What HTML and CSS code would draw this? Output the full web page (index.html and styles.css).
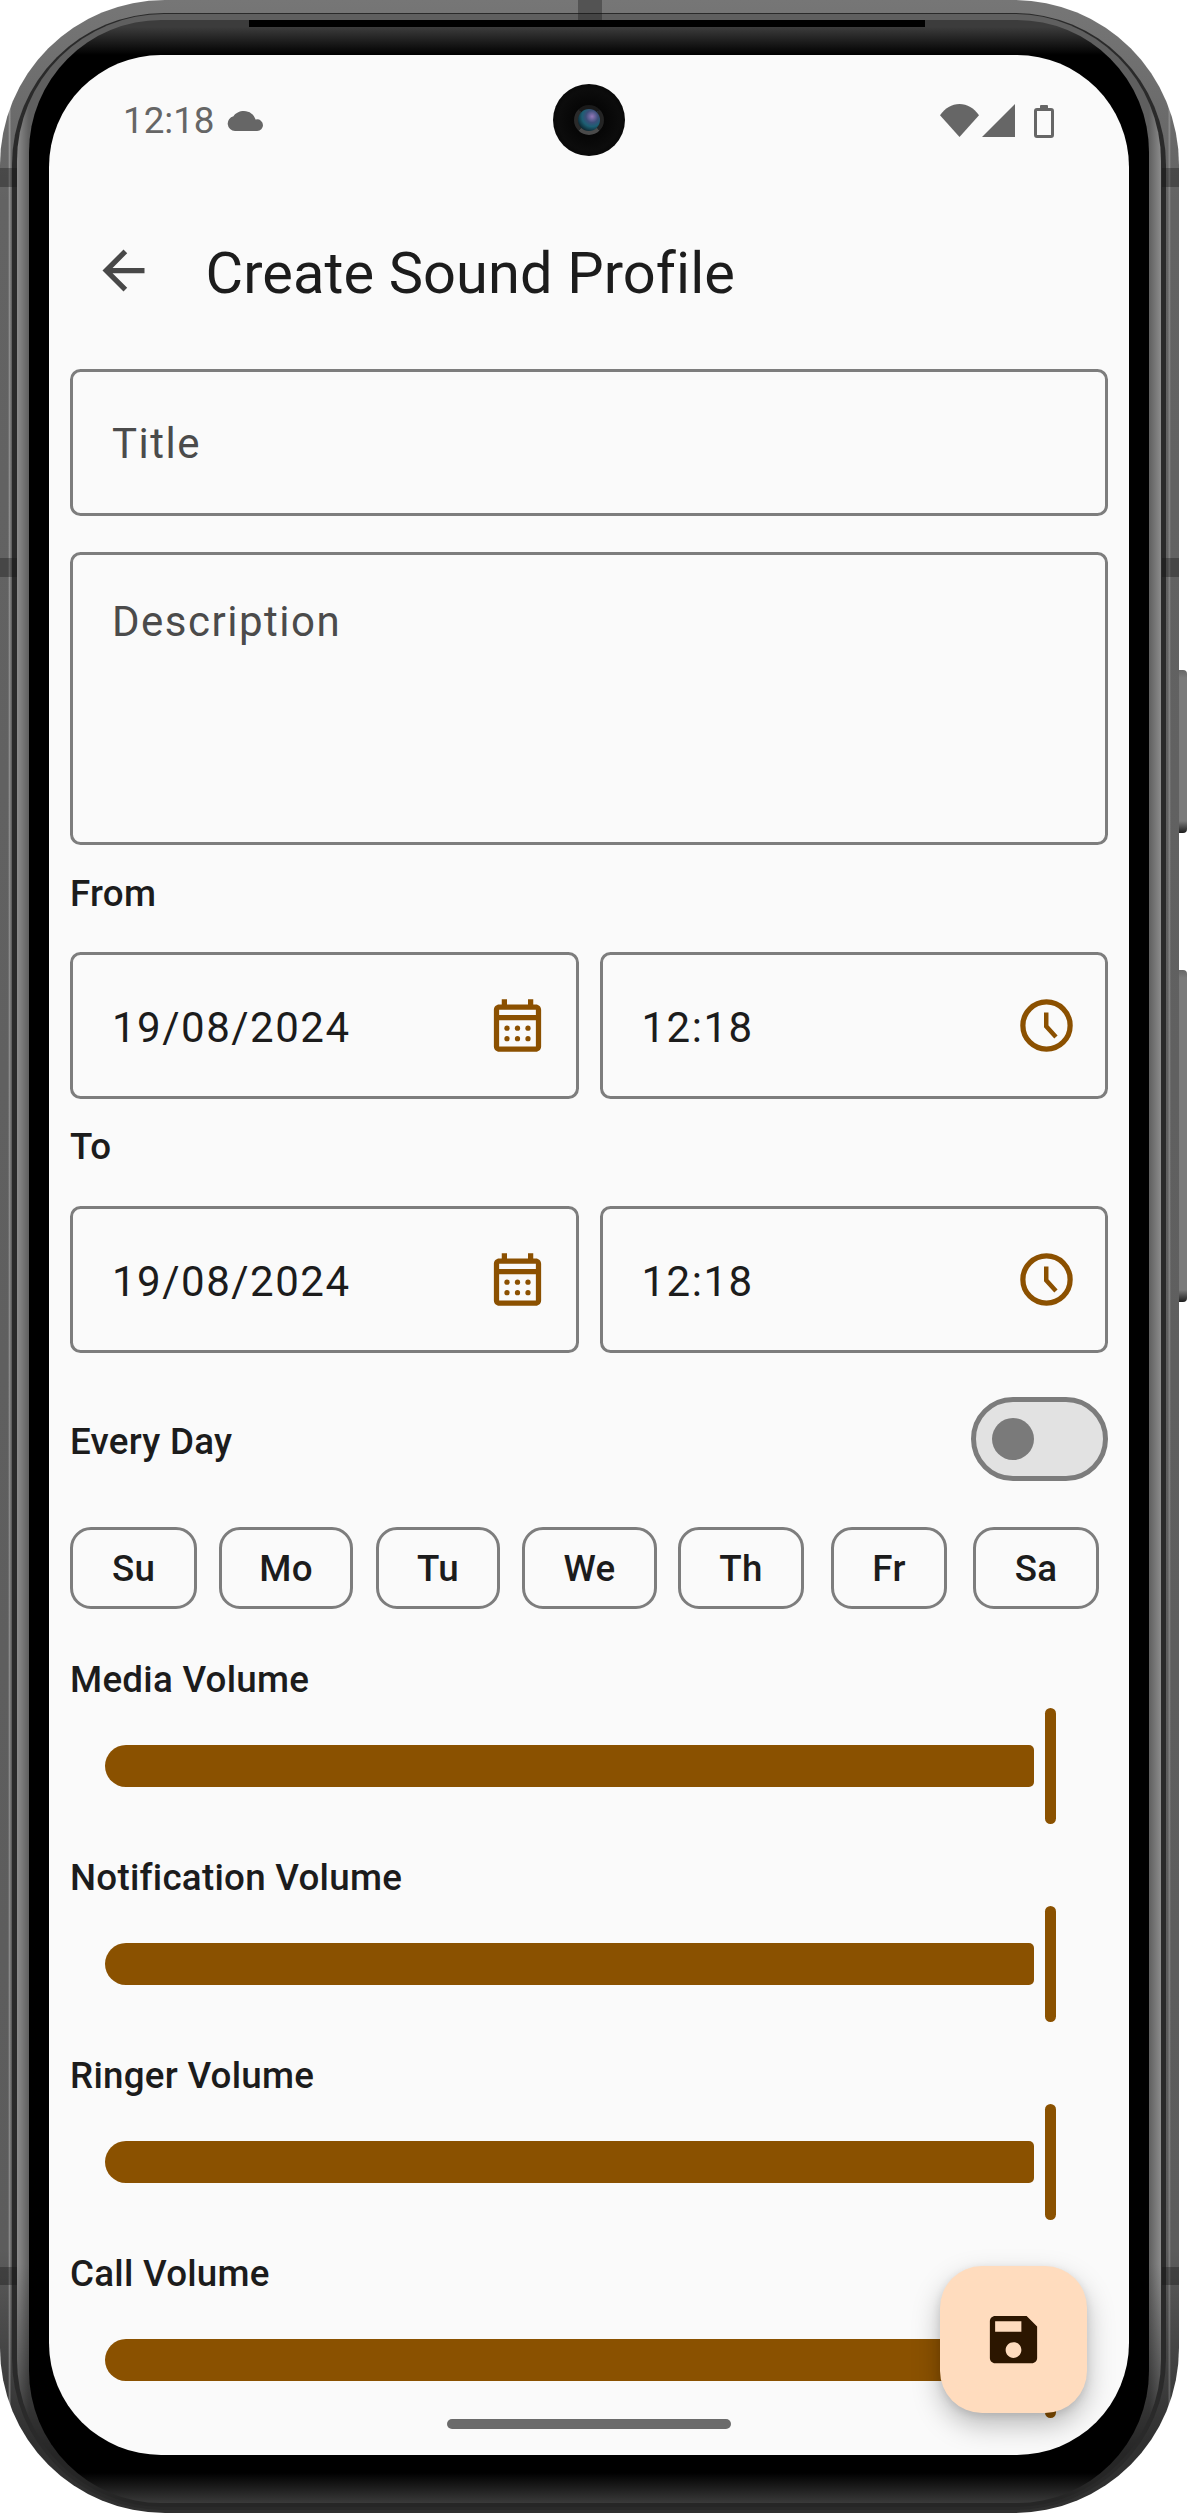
FILE: index.html
```html
<!DOCTYPE html>
<html>

	<head>
		<meta charset="UTF-8">
		<title>Create Sound Profile</title>
		<link rel="stylesheet" href="styles.css">
	</head>

	<body>
		<div class="frame">
			<i class="antenna antenna-top"></i>
			<i class="antenna antenna-left"></i>
			<i class="antenna antenna-left2"></i>
			<i class="antenna antenna-right"></i>
			<i class="antenna antenna-right2"></i>
			<i class="antenna antenna-bottom-left"></i>
			<i class="antenna antenna-bottom-right"></i>
			<i class="side-btn side-power"></i>
			<i class="side-btn side-volume"></i>
			<div class="groove">
				<div class="rim">
					<div class="bezel">
						<i class="slit"></i>
						<div class="screen">
							<div class="camera"><i class="lens"></i></div>

							<div class="statusbar">
								<div class="status-left">
									<span class="clock">12:18</span>
									<svg class="cloud" viewBox="0 0 36 20"><path d="M8 20a7.500 7.500 0 0 1-1.500-14.800 C8.500 2 12.500 0 17 0c5.500 0 10 3.500 11.500 8.500 H29a5.800 5.800 0 0 1 7 5.700 5.800 5.800 0 0 1-5.800 5.800z" /></svg>
								</div>
								<div class="status-right">
									<svg class="wifi" viewBox="0 0 39 33"><path d="M19.500 33 0 11.200C5 4.300 11.800 0 19.500 0S34 4.300 39 11.200z" /></svg>
									<svg class="signal" viewBox="0 0 33 33"><path d="M33 0v33H0z" /></svg>
									<div class="battery"></div>
								</div>
							</div>

							<div class="appbar">
								<svg class="back" viewBox="0 0 24 24"><path d="M20 11H7.830l5.590-5.590L12 4l-8 8 8 8 1.410-1.410L7.830 13H20z" /></svg>
								<h1>Create Sound Profile</h1>
							</div>

							<div class="form">
								<div class="field field-title"><span class="hint">Title</span></div>
								<div class="field field-desc"><span class="hint">Description</span></div>

								<div class="label label-from">From</div>
								<div class="pair">
									<div class="field">
										<span>19/08/2024</span>
										<svg class="ic" viewBox="0 0 24 24"><use href="#calendar" /></svg>
									</div>
									<div class="field">
										<span>12:18</span>
										<svg class="ic" viewBox="0 0 24 24"><use href="#time" /></svg>
									</div>
								</div>

								<div class="label label-to">To</div>
								<div class="pair">
									<div class="field">
										<span>19/08/2024</span>
										<svg class="ic" viewBox="0 0 24 24"><use href="#calendar" /></svg>
									</div>
									<div class="field">
										<span>12:18</span>
										<svg class="ic" viewBox="0 0 24 24"><use href="#time" /></svg>
									</div>
								</div>

								<div class="everyday">
									<div class="label">Every Day</div>
									<div class="switch"><i></i></div>
								</div>

								<div class="days">
									<div class="chip">Su</div>
									<div class="chip">Mo</div>
									<div class="chip">Tu</div>
									<div class="chip">We</div>
									<div class="chip">Th</div>
									<div class="chip">Fr</div>
									<div class="chip">Sa</div>
								</div>

								<div class="volume">
									<div class="label">Media Volume</div>
									<div class="slider"><div class="track"></div><div class="thumb"></div></div>
								</div>
								<div class="volume">
									<div class="label">Notification Volume</div>
									<div class="slider"><div class="track"></div><div class="thumb"></div></div>
								</div>
								<div class="volume">
									<div class="label">Ringer Volume</div>
									<div class="slider"><div class="track"></div><div class="thumb"></div></div>
								</div>
								<div class="volume">
									<div class="label">Call Volume</div>
									<div class="slider"><div class="track"></div><div class="thumb"></div></div>
								</div>
							</div>

							<div class="fab">
								<svg viewBox="0 0 24 24"><path d="M17 3H5c-1.110 0-2 .9-2 2v14c0 1.100.89 2 2 2h14c1.100 0 2-.9 2-2V7l-4-4zm-5 16c-1.660 0-3-1.340-3-3s1.340-3 3-3 3 1.340 3 3-1.340 3-3 3zm3-10H5V5h10v4z" /></svg>
							</div>
							<div class="handle"></div>
						</div>
					</div>
				</div>
			</div>
		</div>

		<svg class="defs">
			<symbol id="calendar" viewBox="0 0 24 24">
				<path d="M19 4h-1V2h-2v2H8V2H6v2H5C3.900 4 3 4.900 3 6v14c0 1.100.9 2 2 2h14c1.100 0 2-.9 2-2V6c0-1.100-.9-2-2-2zm0 16H5V10h14v10zm0-12H5V6h14v2z" />
				<circle cx="8" cy="13" r="1" />
				<circle cx="12" cy="13" r="1" />
				<circle cx="16" cy="13" r="1" />
				<circle cx="8" cy="17" r="1" />
				<circle cx="12" cy="17" r="1" />
				<circle cx="16" cy="17" r="1" />
			</symbol>
			<symbol id="time" viewBox="0 0 24 24">
				<circle cx="12" cy="12" r="9" fill="none" stroke="currentColor" stroke-width="2" />
				<path d="M11.900 7v5.300l3.700 4.100" fill="none" stroke="currentColor" stroke-width="1.700" />
			</symbol>
		</svg>
	</body>

</html>
```

FILE: styles.css
```css
* {
	box-sizing: border-box;
}

html,
body {
	margin: 0;
	background: #fff;
}

body {
	width: 1187px;
	height: 2513px;
	overflow: hidden;
	font-family: Roboto, "Liberation Sans", sans-serif;
	color: #1c1c1c;
}

h1 {
	margin: 0;
}

.defs {
	width: 0;
	height: 0;
	position: absolute;
}

/* phone body */
.frame {
	width: 1179px;
	height: 2513px;
	position: relative;
	padding: 13px 13px 3px 12px;
	border-radius: 165px;
	background:
		linear-gradient(90deg, transparent 8px, rgba(255, 255, 255, .28) 9.500px, transparent 11.500px, transparent calc(100% - 11.500px), rgba(255, 255, 255, .2) calc(100% - 9.500px), transparent calc(100% - 8px)),
		linear-gradient(180deg, #767676 0, #636363 200px, #5c5c5c 2250px, #303030 2440px);
}

.groove {
	height: 100%;
	padding: 1px 5px 3px;
	border-radius: 152px;
	background: #2a2a2a;
}

.rim {
	height: 100%;
	padding: 6px 12px 4px;
	border-radius: 147px;
	background:
		linear-gradient(180deg, transparent 2250px, rgba(0, 0, 0, .6) 2440px),
		linear-gradient(90deg, #8c8c8c 0, #5f5f5f 12px, #5f5f5f calc(100% - 12px), #8c8c8c 100%);
}

.bezel {
	height: 100%;
	position: relative;
	padding: 35px 20px 43px;
	border-radius: 132px;
	background: linear-gradient(180deg, #3c3c3c 7px, #000 35px, #000 calc(100% - 30px), #3a3a3a 100%);
}

.slit {
	position: absolute;
	top: 0;
	left: 220px;
	right: 224px;
	height: 7px;
	background: #000;
}

.antenna {
	position: absolute;
	z-index: 1;
	background: rgba(20, 20, 20, .35);
}

.antenna-top {
	top: 0;
	left: 578px;
	width: 24px;
	height: 20px;
}

.antenna-left {
	top: 168px;
	left: 0;
	width: 17px;
	height: 19px;
}

.antenna-left2 {
	top: 558px;
	left: 0;
	width: 17px;
	height: 19px;
}

.antenna-right {
	top: 168px;
	right: 0;
	width: 17px;
	height: 19px;
}

.antenna-right2 {
	top: 558px;
	right: 0;
	width: 17px;
	height: 19px;
}

.antenna-bottom-left {
	top: 2267px;
	left: 0;
	width: 17px;
	height: 18px;
}

.antenna-bottom-right {
	top: 2267px;
	right: 0;
	width: 17px;
	height: 18px;
}

.side-btn {
	position: absolute;
	right: -8px;
	width: 8px;
	border-radius: 0 4px 4px 0;
	background: linear-gradient(180deg, #666 0, #7a7a7a 8px, #7a7a7a calc(100% - 12px), #1d1d1d 100%);
}

.side-power {
	top: 670px;
	height: 163px;
}

.side-volume {
	top: 970px;
	height: 332px;
}

/* screen */
.screen {
	width: 1080px;
	height: 2400px;
	position: relative;
	overflow: hidden;
	border-radius: 112px;
	background: #fafafa;
}

.camera {
	width: 72px;
	height: 72px;
	position: absolute;
	top: 29px;
	left: 504px;
	display: flex;
	align-items: center;
	justify-content: center;
	border-radius: 50%;
	background: radial-gradient(circle, #000 0, #0c0c0c 60%, #000 100%);
}

.lens {
	width: 30px;
	height: 30px;
	border-radius: 50%;
	border: 4px solid;
	border-color: #1a1a1a #242424 #4a4a4a #2a2a2a;
	background: radial-gradient(circle at 64% 34%, #9478b8 0, #3c4f7a 30%, #1d5f73 50%, #07141c 85%);
}

.statusbar {
	height: 131px;
	padding: 49px 75px 0 74px;
	display: flex;
	justify-content: space-between;
}

.status-left {
	height: 34px;
	display: flex;
	align-items: center;
	gap: 12px;
	color: #666;
}

.clock {
	font-size: 36.750px;
	line-height: 34px;
}

.cloud {
	width: 36px;
	height: 20px;
	fill: #666;
}

.status-right {
	height: 34px;
	display: flex;
	align-items: flex-start;
	fill: #666;
}

.wifi {
	width: 39px;
	height: 33px;
}

.signal {
	width: 33px;
	height: 33px;
	margin-left: 3px;
}

.battery {
	width: 20px;
	height: 30px;
	position: relative;
	margin: 4px 0 0 19px;
	border: 3px solid #666;
	border-radius: 3px;
}

.battery::before {
	content: "";
	width: 8px;
	height: 4px;
	position: absolute;
	top: -6px;
	left: 3px;
	background: #666;
	border-radius: 1px 1px 0 0;
}

.appbar {
	height: 168px;
	display: flex;
	align-items: center;
	padding-left: 42.500px;
}

.back {
	width: 63px;
	height: 63px;
	fill: #484848;
}

.appbar h1 {
	margin: 6px 0 0 51px;
	font-size: 57.750px;
	font-weight: 400;
	line-height: 76px;
	letter-spacing: .1px;
	white-space: nowrap;
}

.form {
	padding: 0 21px;
}

.field {
	height: 147px;
	display: flex;
	align-items: center;
	justify-content: space-between;
	padding: 0 27px 0 39px;
	border: 3px solid #7d7d7d;
	border-radius: 10.500px;
	font-size: 42px;
	letter-spacing: 1.500px;
}

.field span {
	margin-top: 4px;
}

.field .hint {
	margin-top: 2px;
	color: #4b4b4b;
}

.field-title {
	margin-top: 15px;
}

.field-desc {
	height: 293px;
	margin-top: 36px;
	align-items: flex-start;
	padding-top: 40px;
}

.label {
	font-size: 36.750px;
	font-weight: 500;
	line-height: 40px;
	letter-spacing: .26px;
}

.label-from {
	margin-top: 29px;
}

.label-to {
	margin-top: 28px;
}

.pair {
	margin-top: 38px;
	display: grid;
	grid-template-columns: 1fr 1fr;
	gap: 21px;
}

.label-to + .pair {
	margin-top: 39px;
}

.ic {
	width: 63px;
	height: 63px;
	flex: none;
	color: #8b5000;
	fill: #8b5000;
}

.everyday {
	height: 84px;
	margin-top: 44px;
	display: flex;
	align-items: center;
	justify-content: space-between;
}

.everyday .label {
	margin-top: 5px;
}

.switch {
	width: 137px;
	height: 84px;
	position: relative;
	border: 5px solid #7c7c7c;
	border-radius: 42px;
	background: #e2e2e2;
}

.switch i {
	width: 42px;
	height: 42px;
	position: absolute;
	top: 16px;
	left: 16px;
	border-radius: 50%;
	background: #7a7a7a;
}

.days {
	margin-top: 46px;
	display: flex;
	gap: 22px;
}

.chip {
	height: 82px;
	width: 127px;
	display: flex;
	align-items: center;
	justify-content: center;
	border: 3px solid #7d7d7d;
	border-radius: 21px;
	font-size: 36.750px;
	font-weight: 500;
	letter-spacing: .26px;
}

/* chips are as wide as their label, the gaps are uneven in the app */
.chip:nth-child(2) {
	width: 134px;
}

.chip:nth-child(3) {
	width: 124px;
	margin-left: 1px;
}

.chip:nth-child(4) {
	width: 135px;
}

.chip:nth-child(5) {
	width: 126px;
	margin-left: -1px;
}

.chip:nth-child(6) {
	width: 116px;
	margin-left: 5px;
}

.chip:nth-child(7) {
	width: 126px;
	margin-left: 4px;
}

.volume {
	height: 198px;
}

.days + .volume {
	margin-top: 51px;
}

.slider {
	height: 116px;
	margin-top: 8px;
	padding-left: 35px;
	display: flex;
	align-items: center;
	gap: 11px;
}

.track {
	width: 929px;
	height: 42px;
	border-radius: 21px 5px 5px 21px;
	background: #8a5100;
}

.thumb {
	width: 11px;
	height: 116px;
	border-radius: 5.500px;
	background: #8a5100;
}

.fab {
	width: 147px;
	height: 147px;
	position: absolute;
	right: 42px;
	bottom: 42px;
	display: flex;
	align-items: center;
	justify-content: center;
	border-radius: 42px;
	background: #ffdcbe;
	box-shadow: 0 12px 28px rgba(0, 0, 0, .26), 0 3px 8px rgba(0, 0, 0, .1);
}

.fab svg {
	width: 63px;
	height: 63px;
	fill: #2c1600;
}

.handle {
	width: 284px;
	height: 10px;
	position: absolute;
	left: 398px;
	bottom: 26px;
	border-radius: 5px;
	background: #6b6b6b;
}
```
